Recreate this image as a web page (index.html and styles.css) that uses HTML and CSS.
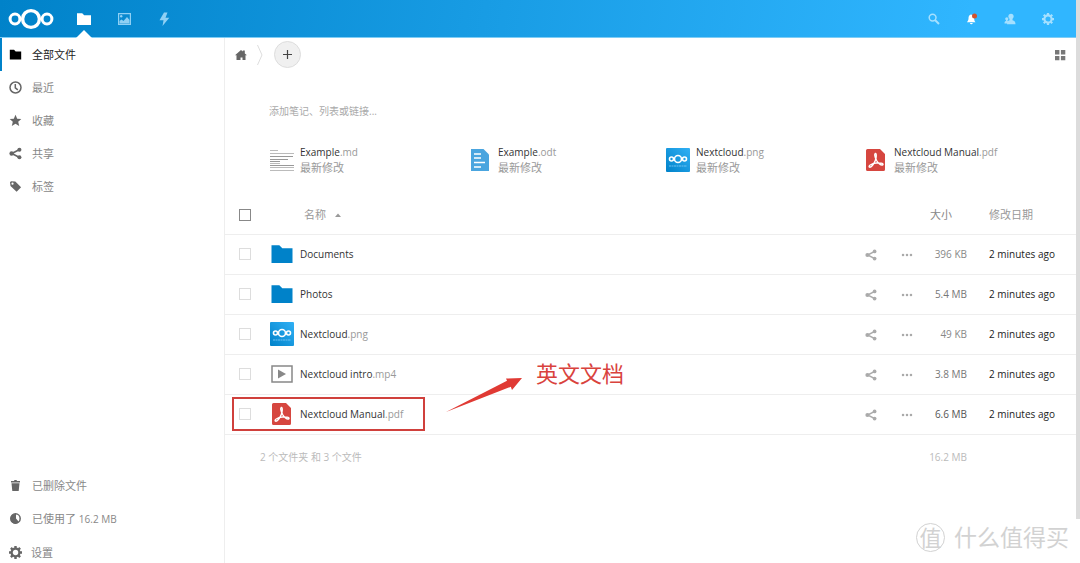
FILE: index.html
```html
<!DOCTYPE html>
<html lang="zh-CN">
<head>
<meta charset="utf-8">
<meta name="viewport" content="width=device-width, initial-scale=1">
<title>文件 - Nextcloud</title>
<link rel="stylesheet" href="styles.css">
</head>
<body>
<svg class="defs" aria-hidden="true">
  <defs>
    <linearGradient id="tile" x1="0" y1="1" x2="1" y2="0"><stop offset="0" stop-color="#0082c9"/><stop offset="1" stop-color="#30b0f5"/></linearGradient>
    <symbol id="i-folder" viewBox="0 0 16 16"><path d="M1 2.200h5.200l2 2H15V14H1z"/></symbol>
    <symbol id="i-share" viewBox="0 0 16 16"><path d="M13 3.200L3.500 8l9.500 4.800" fill="none" stroke="currentColor" stroke-width="2"/><circle cx="12.800" cy="3.300" r="2.500"/><circle cx="3.200" cy="8" r="2.700"/><circle cx="12.800" cy="12.700" r="2.500"/></symbol>
    <symbol id="i-more" viewBox="0 0 16 16"><circle cx="2.700" cy="8" r="1.700"/><circle cx="8" cy="8" r="1.700"/><circle cx="13.300" cy="8" r="1.700"/></symbol>
    <symbol id="i-gear" viewBox="0 0 16 16"><circle cx="8" cy="8" r="4.800" fill="none" stroke="currentColor" stroke-width="2.800"/><path d="M6.500 0h3v3h-3zM6.500 13h3v3h-3zM0 6.500h3v3H0zM13 6.500h3v3h-3zM1.300 3.400l2.100-2.100 2 2-2.100 2.100zM10.600 12.700l2.100-2.100 2 2-2.100 2.100zM12.600 1.300l2.100 2.100-2 2-2.100-2.100zM3.300 10.600l2.100 2.100-2 2-2.100-2.100z"/></symbol>
    <symbol id="i-nc" viewBox="0 0 24 24"><rect width="24" height="24" rx="1" fill="url(#tile)"/><g fill="none" stroke="#fff" stroke-width="1.600"><circle cx="12" cy="11" r="3.500"/><circle cx="5.500" cy="11" r="2"/><circle cx="18.500" cy="11" r="2"/></g><path d="M3 18h18" stroke="#6cc2f2" stroke-width="1" stroke-dasharray="2 .5"/></symbol>
    <symbol id="i-pdf" viewBox="0 0 20 22"><path d="M1.500 0H14l5 5v15.500a1.500 1.500 0 0 1-1.500 1.500h-16A1.500 1.500 0 0 1 0 20.500v-19A1.500 1.500 0 0 1 1.500 0z" fill="#d6463f"/><path d="M9.200 4.500c-1.300.8.200 4.500 1.400 7 1.400 2.500 4.300 5.200 6.200 4.300 1.400-1.500-3.800-2.300-6.800-1.800-3.300.4-7.500 2.300-6.800 3.900 1.700 1.400 4.800-3.200 6-6.200 1.200-2.700 1.600-7.600 0-7.200z" fill="none" stroke="#fff" stroke-width="1.400"/></symbol>
  </defs>
</svg>

<header class="topbar">
  <a class="logo" href="#" aria-label="Nextcloud">
    <svg width="46" height="22" viewBox="0 0 46 22"><g fill="none" stroke="#fff"><circle cx="23" cy="11" r="8.400" stroke-width="3.400"/><circle cx="7" cy="11" r="4.900" stroke-width="3"/><circle cx="39" cy="11" r="4.900" stroke-width="3"/></g></svg>
  </a>
  <nav class="apps">
    <a class="app active" href="#" aria-label="文件"><svg width="16" height="16"><use href="#i-folder"/></svg></a>
    <a class="app" href="#" aria-label="图片"><svg width="15" height="14" viewBox="0 0 15 14"><path fill-rule="evenodd" d="M1 1h13v12H1zM2.200 2.200v9.600h10.600V2.200z"/><circle cx="4.200" cy="4.300" r="1.200"/><path d="M2.500 11.500V9l2-1.500 2 1.500L10 5l2.500 3v3.500z"/></svg></a>
    <a class="app" href="#" aria-label="动态"><svg width="16" height="16" viewBox="0 0 16 16"><path d="M8 1.500L3.500 9.200h4L6.500 15l6.800-8.200H9.500L11.500 1.500z"/></svg></a>
  </nav>
  <div class="tools">
    <button class="tool" aria-label="搜索"><svg width="12" height="12" viewBox="0 0 12 12"><circle cx="4.600" cy="4.600" r="3.400" fill="none" stroke="currentColor" stroke-width="1.500"/><path d="M7 7l4 4" stroke="currentColor" stroke-width="1.900"/></svg></button>
    <button class="tool bright" aria-label="通知"><svg width="12" height="12" viewBox="0 0 12 12"><path d="M5 1.500C3 2 2.500 3.500 2.500 5.500S1.500 8 1 9.300h8.500C8.500 8 8.300 7.500 8.200 5.500S7 2 5 1.500zM4 10h2.700a1.300 1.300 0 0 1-2.700 0z"/><circle cx="8.500" cy="3" r="2.500" fill="#d0522e"/></svg></button>
    <button class="tool" aria-label="联系人"><svg width="12" height="12" viewBox="0 0 12 12"><circle cx="7" cy="3.300" r="2.600"/><path d="M5.500 5h3v2.200c2 .7 3 1.500 3 4H3c0-2.500.5-3.300 2.500-4z"/><circle cx="2.800" cy="5.800" r="1.600"/><path d="M2 6.500h1.500V8l1 .5-1 2H.5c0-1.400.3-2.100 1.500-2.500z"/></svg></button>
    <button class="tool" aria-label="设置"><svg width="12" height="12"><use href="#i-gear"/></svg></button>
  </div>
</header>

<div class="body">
  <aside class="sidebar">
    <nav class="nav">
      <a class="item current" href="#"><svg width="13" height="13"><use href="#i-folder"/></svg>全部文件</a>
      <a class="item" href="#"><svg width="13" height="13" viewBox="0 0 13 13"><circle cx="6.500" cy="6.500" r="5.500" fill="none" stroke="currentColor" stroke-width="1.500"/><path d="M6.300 3v3.800l2.500 2" fill="none" stroke="currentColor" stroke-width="1.500"/></svg>最近</a>
      <a class="item" href="#"><svg width="13" height="13" viewBox="0 0 13 13"><path d="M6.500.8l1.700 4 4.100.3-3.100 2.700 1 4.200-3.700-2.300L2.800 12l1-4.200L.7 5.100l4.100-.3z"/></svg>收藏</a>
      <a class="item" href="#"><svg width="13" height="13"><use href="#i-share"/></svg>共享</a>
      <a class="item" href="#"><svg width="13" height="13" viewBox="0 0 13 13"><path fill-rule="evenodd" d="M1 2.200L2 1.200l4.300.3 5.800 5.800-4.500 4.500L1.500 6zM3.500 2.600a1.100 1.100 0 1 0 0 2.200 1.100 1.100 0 0 0 0-2.200z"/></svg>标签</a>
    </nav>
    <nav class="nav">
      <a class="item" href="#"><svg width="13" height="13" viewBox="0 0 13 13"><path d="M2 2h3l.5-1h2L8 2h3v1.600H2zM2.500 4.300h8L9.700 12H3.300z"/></svg>已删除文件</a>
      <a class="item" href="#"><svg width="13" height="13" viewBox="0 0 13 13"><circle cx="6.500" cy="6.500" r="4.700" fill="none" stroke="currentColor" stroke-width="1.500"/><path d="M7 2v4.500l3 3.500C6 13.500 1.500 11 1.500 6.500 1.500 3.500 4 1.500 7 2z"/></svg><span>已使用了 <span class="latin">16.2 MB</span></span></a>
      <a class="item settings" href="#"><svg width="13" height="13"><use href="#i-gear"/></svg>设置</a>
    </nav>
  </aside>

  <main class="content">
    <div class="controls">
      <a class="home" href="#" aria-label="主页"><svg width="12" height="12" viewBox="0 0 12 12"><path d="M6 1l1.800 1.600V1.500h2v3L12 6.300h-1.500V11h-3V8.500h-2V11h-4V6.300H0z"/></svg></a>
      <svg class="crumb" width="6" height="24" viewBox="0 0 6 24"><path d="M.5 2l4.500 10-4.500 10" fill="none" stroke="#ddd"/></svg>
      <button class="add" aria-label="新建"><svg width="11" height="11" viewBox="0 0 11 11"><path d="M5.500 1v9M1 5.500h9" stroke="#444" stroke-width="1.200"/></svg></button>
      <button class="view" aria-label="网格视图"><svg width="12" height="12" viewBox="0 0 12 12"><path d="M1 1h4.400v4.400H1zM6.900 1h4.400v4.400H6.900zM1 6.900h4.400v4.400H1zM6.900 6.900h4.400v4.400H6.900z"/></svg></button>
    </div>

    <input class="note" type="text" aria-label="笔记" placeholder="添加笔记、列表或链接...">

    <section class="recent">
      <a class="card" href="#"><span class="thumb"><svg width="24" height="24" viewBox="0 0 24 24" stroke="#bbb" stroke-width="1"><path d="M0 2.500h8M0 5.500h24M0 19.500h24M0 22.500h24M0 15.500h10" /><path d="M0 8.500h23M0 11.500h18M0 13.500h10M0 17.500h24" stroke="#999"/></svg></span><span>Example<i>.md</i><small>最新修改</small></span></a>
      <a class="card" href="#"><span class="thumb"><svg width="20" height="22" viewBox="0 0 20 22"><path d="M1 0h12.500L19 5.500V22H1z" fill="#4aa5df"/><path d="M4 5h7M4 9h7M4 13.500h11M4 18h7" stroke="#fff" stroke-width="1.600"/></svg></span><span>Example<i>.odt</i><small>最新修改</small></span></a>
      <a class="card" href="#"><span class="thumb"><svg width="24" height="24"><use href="#i-nc"/></svg></span><span>Nextcloud<i>.png</i><small>最新修改</small></span></a>
      <a class="card" href="#"><span class="thumb"><svg width="20" height="22"><use href="#i-pdf"/></svg></span><span>Nextcloud Manual<i>.pdf</i><small>最新修改</small></span></a>
    </section>

    <table class="files">
      <thead>
        <tr><th class="check"><input type="checkbox" aria-label="全选"></th><th class="icon"></th><th class="name"><span class="sort">名称 <svg width="6" height="4" viewBox="0 0 6 4"><path d="M0 4l3-3.500L6 4z"/></svg></span></th><th class="act"></th><th class="act"></th><th class="size">大小</th><th class="date">修改日期</th></tr>
      </thead>
      <tbody>
        <tr><td class="check"><input type="checkbox" aria-label="选择 Documents"></td><td class="icon"><svg class="folder" width="24" height="24"><use href="#i-folder"/></svg></td><td class="name">Documents</td><td class="act"><button aria-label="共享"><svg width="12" height="12"><use href="#i-share"/></svg></button></td><td class="act"><button aria-label="更多"><svg width="12" height="12"><use href="#i-more"/></svg></button></td><td class="size">396 KB</td><td class="date">2 minutes ago</td></tr>
        <tr><td class="check"><input type="checkbox" aria-label="选择 Photos"></td><td class="icon"><svg class="folder" width="24" height="24"><use href="#i-folder"/></svg></td><td class="name">Photos</td><td class="act"><button aria-label="共享"><svg width="12" height="12"><use href="#i-share"/></svg></button></td><td class="act"><button aria-label="更多"><svg width="12" height="12"><use href="#i-more"/></svg></button></td><td class="size mid">5.4 MB</td><td class="date">2 minutes ago</td></tr>
        <tr><td class="check"><input type="checkbox" aria-label="选择 Nextcloud.png"></td><td class="icon"><svg width="24" height="24"><use href="#i-nc"/></svg></td><td class="name">Nextcloud<i>.png</i></td><td class="act"><button aria-label="共享"><svg width="12" height="12"><use href="#i-share"/></svg></button></td><td class="act"><button aria-label="更多"><svg width="12" height="12"><use href="#i-more"/></svg></button></td><td class="size">49 KB</td><td class="date">2 minutes ago</td></tr>
        <tr><td class="check"><input type="checkbox" aria-label="选择 Nextcloud intro.mp4"></td><td class="icon"><svg width="22" height="18" viewBox="0 0 22 18"><path d="M1 1h20v16H1z" fill="none" stroke="#888" stroke-width="1.500"/><path d="M7 4.500l8 4.500-8 4.500z" fill="#888"/></svg></td><td class="name">Nextcloud intro<i>.mp4</i></td><td class="act"><button aria-label="共享"><svg width="12" height="12"><use href="#i-share"/></svg></button></td><td class="act"><button aria-label="更多"><svg width="12" height="12"><use href="#i-more"/></svg></button></td><td class="size mid">3.8 MB</td><td class="date">2 minutes ago</td></tr>
        <tr><td class="check"><input type="checkbox" aria-label="选择 Nextcloud Manual.pdf"></td><td class="icon"><svg width="20" height="22"><use href="#i-pdf"/></svg></td><td class="name">Nextcloud Manual<i>.pdf</i></td><td class="act"><button aria-label="共享"><svg width="12" height="12"><use href="#i-share"/></svg></button></td><td class="act"><button aria-label="更多"><svg width="12" height="12"><use href="#i-more"/></svg></button></td><td class="size dark">6.6 MB</td><td class="date">2 minutes ago</td></tr>
      </tbody>
      <tfoot>
        <tr><td class="total" colspan="5">2 个文件夹 和 3 个文件</td><td class="size faint">16.2 MB</td><td></td></tr>
      </tfoot>
    </table>

    <div class="frame"></div>
    <svg class="arrow" width="76" height="36" viewBox="0 0 76 36"><path d="M0 35L61 3.800 60 1.500 76 1 66 13l-1.200-3.200z" fill="#e03a34"/></svg>
    <div class="remark">英文文档</div>
  </main>
</div>

<div class="scrollbar"></div>
<div class="watermark"><span class="seal">值</span>什么值得买</div>
</body>
</html>
```
FILE: styles.css
```css
* { box-sizing: border-box; }
html, body { height: 100%; }
body {
  margin: 0;
  padding-right: 4px;
  display: flex;
  flex-direction: column;
  overflow: hidden;
  background: #fff;
  color: #333;
  font: 10px/15px "Open Sans", "Noto Sans CJK SC", sans-serif;
}
a { color: inherit; text-decoration: none; }
i { font-style: normal; color: #999; }
svg { display: block; flex: none; fill: currentColor; }
button { padding: 0; border: 0; background: none; color: inherit; }
.defs { position: absolute; width: 0; height: 0; }
.latin { font-size: 10px; }

.topbar {
  flex: none;
  height: 38px;
  display: flex;
  align-items: stretch;
  border-bottom: 1px solid #7fcdf5;
  background: linear-gradient(100deg, #0082c9 0%, #30b6ff 90%);
  color: #fff;
}
.logo { display: flex; align-items: center; padding-left: 8px; }
.apps { display: flex; margin-left: 10px; }
.app { width: 40px; display: flex; align-items: center; justify-content: center; color: #8fd0f4; }
.app.active { position: relative; color: #fff; }
.app.active::after {
  content: "";
  position: absolute;
  bottom: -1px;
  left: 12px;
  border: 8px solid transparent;
  border-top: 0;
  border-bottom-color: #fff;
}
.tools { display: flex; margin-left: auto; padding-right: 9px; color: #a5e0ff; }
.tool { width: 38px; display: flex; align-items: center; justify-content: center; }
.bright { color: #fff; }

.body { flex: 1; min-height: 0; display: flex; }
.sidebar {
  width: 225px;
  flex: none;
  display: flex;
  flex-direction: column;
  justify-content: space-between;
  border-right: 1px solid #eee;
}
.nav { display: flex; flex-direction: column; }
.item { height: 33px; display: flex; align-items: center; gap: 10px; padding-left: 9px; font-size: 11px; color: #888; }
.item svg { color: #666; }
.item.current { border-left: 2px solid #0082c9; padding-left: 7px; color: #222; }
.item.current svg { color: #000; }
.item.settings { height: 28px; gap: 9px; padding-top: 6px; }

.content { flex: 1; min-width: 0; position: relative; }
.controls { height: 33px; display: flex; align-items: center; padding: 0 10px; }
.home { color: #666; }
.crumb { margin-left: 10px; }
.add {
  width: 27px;
  height: 27px;
  margin-left: 11px;
  border: 1px solid #ddd;
  border-radius: 50%;
  background: #f0f0f0;
  display: flex;
  align-items: center;
  justify-content: center;
}
.view { margin-left: auto; color: #777; }
.note {
  display: block;
  width: 60%;
  height: 20px;
  margin: 30px 0 0 44px;
  padding: 0;
  border: 0;
  outline: 0;
  font: inherit;
}
.note::placeholder { color: #aaa; opacity: 1; }

.recent {
  display: grid;
  grid-template-columns: repeat(4, 1fr);
  margin-top: 24px;
  padding: 0 17px 0 42px;
}
.card { display: flex; align-items: center; gap: 4px; }
.thumb { width: 29px; flex: none; display: flex; justify-content: center; }
.card small { display: block; font-size: 11px; color: #999; }

.files { width: 100%; margin-top: 21px; border-collapse: collapse; table-layout: fixed; }
th { height: 38px; padding: 0; font-size: 11px; font-weight: normal; text-align: left; color: #999; border-bottom: 1px solid #eee; }
tbody td { height: 40px; padding: 0; border-bottom: 1px solid #eee; }
.check { width: 42px; }
.files .check { padding-left: 14px; }
.check input {
  appearance: none;
  display: block;
  width: 12px;
  height: 12px;
  margin: 0;
  border: 1px solid #ddd;
  background: #fff;
}
th.check input { border-color: #888; }
.icon { width: 33px; }
.icon svg { margin: 0 auto; }
td.icon { padding-right: 4px; }
.folder { color: #0082c9; }
.sort { display: flex; align-items: center; gap: 9px; padding-left: 4px; }
.act { width: 36px; color: #aaa; }
.act button { display: block; margin: 2px auto 0; }
.size { width: 42px; color: #888; white-space: nowrap; }
td.size { text-align: right; }
th.size { padding-left: 5px; }
.size.mid { color: #777; }
.size.dark { color: #555; }
.size.faint { color: #bbb; }
.files .date { width: 109px; padding-left: 22px; }
td.date { color: #222; }
tfoot td { height: 46px; padding: 0; color: #bbb; }
tfoot .total { padding-left: 35px; }

.frame { position: absolute; left: 7px; top: 359px; width: 193px; height: 34px; border: 2px solid #d0403c; }
.arrow { position: absolute; left: 221px; top: 339px; }
.remark { position: absolute; left: 311px; top: 319px; font-size: 22px; line-height: 32px; color: #d9423d; }

.scrollbar { position: absolute; right: 0; top: 0; width: 4px; height: 519px; background: #dcdcdc; }
.watermark {
  position: absolute;
  right: 11px;
  bottom: 10px;
  display: flex;
  align-items: center;
  gap: 9px;
  font-size: 23px;
  line-height: 32px;
  color: #d2d2d2;
}
.seal {
  width: 29px;
  height: 29px;
  border: 1px solid #d2d2d2;
  border-radius: 50%;
  font-size: 22px;
  line-height: 26px;
  text-align: center;
}
```
